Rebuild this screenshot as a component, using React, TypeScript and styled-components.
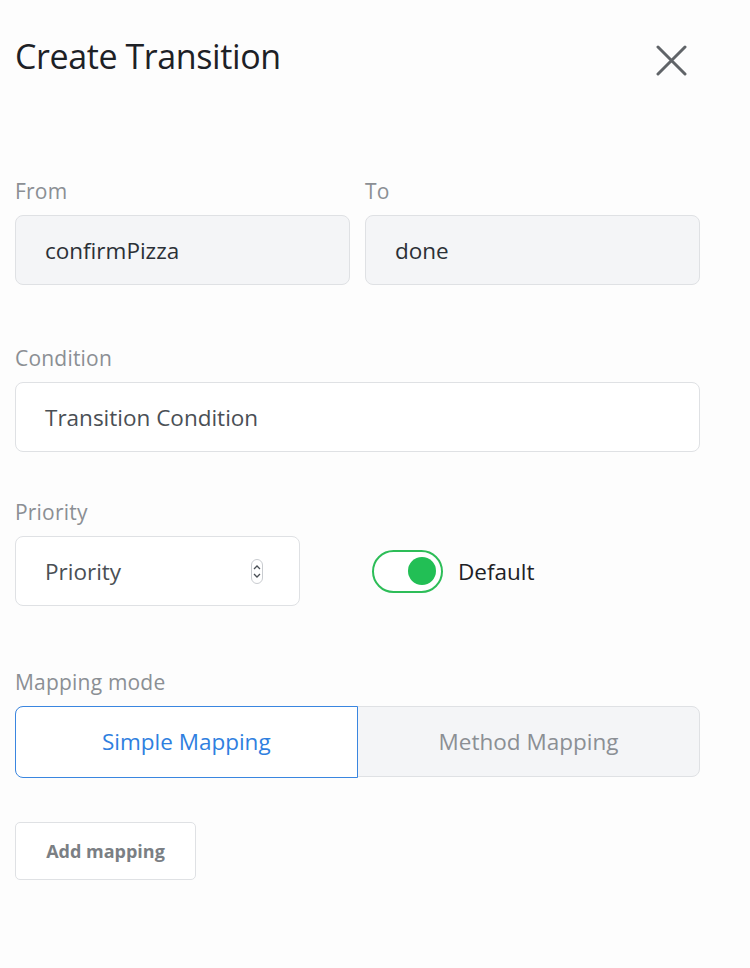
import React from "react";
import styled, { createGlobalStyle } from "styled-components";

const Global = createGlobalStyle`
  html, body { margin: 0; padding: 0; background: #fdfdfd; }
  body { font-family: "Open Sans", Lato, sans-serif; -webkit-font-smoothing: antialiased; }
  * { box-sizing: border-box; }
`;

const Page = styled.div`
  width: 750px;
  min-height: 968px;
  padding: 35px 50px 0 15px;
  background: #fdfdfd;
`;

const Header = styled.div`
  display: flex;
  align-items: flex-start;
  justify-content: space-between;
  height: 144px;
`;

const Title = styled.h1`
  margin: 0;
  font-size: 34px;
  line-height: 42px;
  font-weight: 400;
  color: #1d2126;
  letter-spacing: -0.4px;
`;

const CloseButton = styled.button`
  border: 0;
  background: transparent;
  padding: 0;
  margin: 10px 13px 0 0;
  width: 31px;
  height: 31px;
  cursor: pointer;
  display: flex;
`;

const Field = styled.div<{ $mt?: number }>`
  display: flex;
  flex-direction: column;
  margin-top: ${(p) => p.$mt ?? 0}px;
`;

const Label = styled.label`
  font-size: 21px;
  line-height: 24px;
  color: #8b8f94;
  margin-bottom: 12px;
  letter-spacing: 0.2px;
`;

const TwoCol = styled.div`
  display: grid;
  grid-template-columns: 335px 335px;
  column-gap: 15px;
`;

const Input = styled.div<{ $disabled?: boolean; $w?: number }>`
  height: 70px;
  width: ${(p) => (p.$w ? `${p.$w}px` : "100%")};
  border: 1.5px solid #dfe1e4;
  border-radius: 8px;
  background: ${(p) => (p.$disabled ? "#f4f5f7" : "#ffffff")};
  display: flex;
  align-items: center;
  justify-content: space-between;
  padding: 0 30px 0 29px;
  font-size: 22.5px;
  color: ${(p) => (p.$disabled ? "#2b3036" : "#4a4f55")};
`;

const PriorityRow = styled.div`
  display: flex;
  align-items: center;
  gap: 72px;
`;

const Spinner = styled.span`
  width: 12px;
  height: 25px;
  border: 1px solid #c9ccd0;
  border-radius: 6px;
  display: flex;
  align-items: center;
  justify-content: center;
  margin-right: 6px;
`;

const ToggleWrap = styled.div`
  display: flex;
  align-items: center;
  gap: 15px;
`;

const Track = styled.span<{ $on?: boolean }>`
  width: 71px;
  height: 43px;
  border-radius: 22px;
  border: 2px solid #2dbd58;
  background: #ffffff;
  display: flex;
  align-items: center;
  justify-content: ${(p) => (p.$on ? "flex-end" : "flex-start")};
  padding: 0 5px;
`;

const Knob = styled.span`
  width: 28px;
  height: 28px;
  border-radius: 50%;
  background: #22bf55;
`;

const ToggleLabel = styled.span`
  font-size: 22.5px;
  color: #1d2126;
`;

const Segmented = styled.div`
  display: grid;
  grid-template-columns: 342px 1fr;
  height: 71px;
  border: 1.5px solid #dfe1e4;
  border-radius: 8px;
  background: #f4f5f7;
`;

const Segment = styled.button<{ $active?: boolean }>`
  font-family: inherit;
  font-size: 22.5px;
  border: ${(p) => (p.$active ? "1.5px solid #3a86e0" : "0")};
  margin: ${(p) => (p.$active ? "-1.5px 0 -1.5px -1.5px" : "0")};
  border-radius: ${(p) => (p.$active ? "8px 0 0 8px" : "0 8px 8px 0")};
  background: ${(p) => (p.$active ? "#ffffff" : "transparent")};
  color: ${(p) => (p.$active ? "#2f7fe0" : "#8b8f94")};
  cursor: pointer;
  padding: 0;
`;

const AddButton = styled.button`
  margin-top: 45px;
  width: 181px;
  height: 58px;
  border: 1.5px solid #dfe1e4;
  border-radius: 5px;
  background: #ffffff;
  font-family: inherit;
  font-size: 18px;
  font-weight: 700;
  color: #7b7f84;
  cursor: pointer;
`;

export default function App() {
  return (
    <>
      <Global />
      <Page>
        <Header>
          <Title>Create Transition</Title>
          <CloseButton aria-label="Close">
            <svg width="31" height="31" viewBox="0 0 31 31">
              <path d="M2 2 L29 29 M29 2 L2 29" stroke="#606468" strokeWidth="3" strokeLinecap="round" />
            </svg>
          </CloseButton>
        </Header>

        <TwoCol>
          <Field>
            <Label>From</Label>
            <Input $disabled>confirmPizza</Input>
          </Field>
          <Field>
            <Label>To</Label>
            <Input $disabled>done</Input>
          </Field>
        </TwoCol>

        <Field $mt={61}>
          <Label>Condition</Label>
          <Input>Transition Condition</Input>
        </Field>

        <Field $mt={48}>
          <Label>Priority</Label>
          <PriorityRow>
            <Input $w={285}>
              Priority
              <Spinner>
                <svg width="8" height="17" viewBox="0 0 8 17">
                  <path d="M1 6 L4 3 L7 6 M1 11 L4 14 L7 11" fill="none" stroke="#4a4f55" strokeWidth="1.3" />
                </svg>
              </Spinner>
            </Input>
            <ToggleWrap>
              <Track $on>
                <Knob />
              </Track>
              <ToggleLabel>Default</ToggleLabel>
            </ToggleWrap>
          </PriorityRow>
        </Field>

        <Field $mt={64}>
          <Label>Mapping mode</Label>
          <Segmented>
            <Segment $active>Simple Mapping</Segment>
            <Segment>Method Mapping</Segment>
          </Segmented>
        </Field>

        <AddButton>Add mapping</AddButton>
      </Page>
    </>
  );
}
